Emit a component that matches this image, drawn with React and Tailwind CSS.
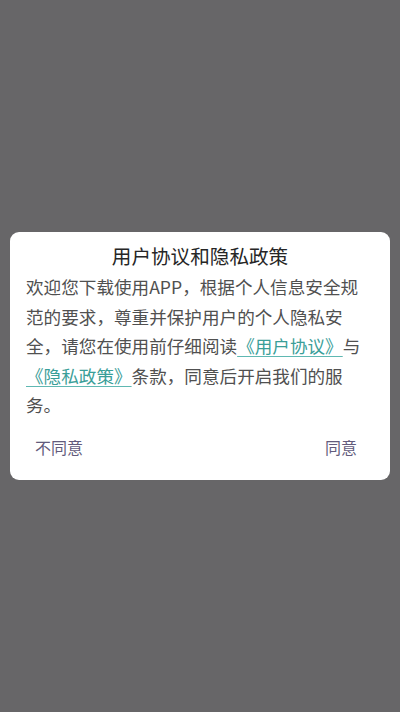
import React from 'react'

function App() {
  return (
    <div className="flex h-[712px] w-[400px] flex-col bg-[#676668] px-[10px] pt-[232px] font-['Noto_Sans_CJK_SC',sans-serif]">
      <div className="rounded-[9px] bg-white pb-[20px]">
        <h2 className="pt-[12px] text-center text-[19.6px] leading-[24px] text-[#262626]">用户协议和隐私政策</h2>
        <p className="mt-[4px] pl-[16px] pr-[26px] text-[17.6px] leading-[29.6px] text-[#505050]">
          欢迎您下载使用APP，根据个人信息安全规范的要求，尊重并保护用户的个人隐私安全，请您在使用前仔细阅读
          <span className="text-[#3a9e98] underline decoration-[#5fb8b2] underline-offset-[3px]">《用户协议》</span>
          与
          <span className="text-[#3a9e98] underline decoration-[#5fb8b2] underline-offset-[3px]">《隐私政策》</span>
          条款，同意后开启我们的服务。
        </p>
        <div className="mt-[14px] flex items-center justify-between px-[25px] text-[16px] leading-[26px] text-[#625b7c]">
          <button>不同意</button>
          <button className="px-[8px]">同意</button>
        </div>
      </div>
    </div>
  )
}

export default App
